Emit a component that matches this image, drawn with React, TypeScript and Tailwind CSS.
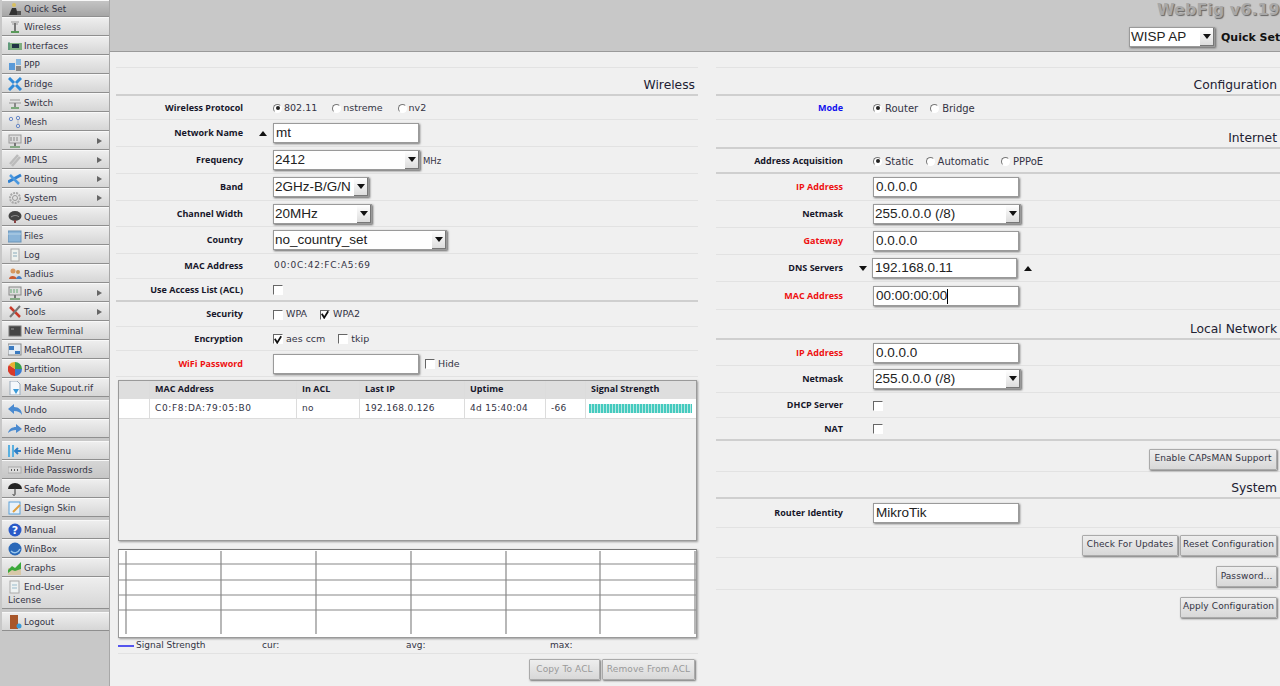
import React from "react";

const F = "font-['DejaVu_Sans',sans-serif]";
const A = "font-['Liberation_Sans',Arial,sans-serif]";
const O = "font-['Open_Sans',sans-serif]";

function Ico({ n }: { n: string }) {
  const s = (c: React.ReactNode) => (
    <svg viewBox="0 0 14 14" className="w-[14px] h-[14px] shrink-0 inline-block align-middle">{c}</svg>
  );
  switch (n) {
    case "quick": return s(<><path d="M1 13 L4 6 L8 6 L10 13Z" fill="#333" /><path d="M9 9h4v4H9z" fill="#555" /><circle cx="6" cy="3" r="2" fill="#d8c060" /></>);
    case "wireless": return s(<><path d="M3 2h8M4 4h6" stroke="#999" fill="none" /><path d="M7 3v8" stroke="#777" strokeWidth="2" /><path d="M3 12h8" stroke="#5a9a5a" strokeWidth="2" /></>);
    case "interfaces": return s(<><rect x="0" y="4" width="14" height="7" fill="#7fae7f" /><rect x="4" y="5" width="7" height="4" fill="#234" /><path d="M1 3v8" stroke="#487" /></>);
    case "ppp": return s(<><rect x="1" y="5" width="6" height="7" fill="#5a9ad8" /><rect x="8" y="1" width="5" height="6" fill="#8ab8e0" /><rect x="8" y="8" width="5" height="5" fill="#888" /></>);
    case "bridge": return s(<><path d="M1 1l5 5M13 1L8 6M1 13l5-5M13 13L8 8" stroke="#2f8ad8" strokeWidth="3" /></>);
    case "switch": return s(<><path d="M2 4h10M1 7h12" stroke="#999" /><path d="M7 7v4" stroke="#888" strokeWidth="2" /><path d="M3 12h8" stroke="#7aa87a" strokeWidth="2" /></>);
    case "mesh": return s(<><circle cx="3" cy="4" r="1.7" fill="none" stroke="#6a8ac8" /><circle cx="10" cy="3" r="1.7" fill="none" stroke="#6a8ac8" /><circle cx="10" cy="11" r="1.7" fill="none" stroke="#6a8ac8" /><path d="M10 5v4" stroke="#bbb" /></>);
    case "ip": return s(<><rect x="1" y="1" width="12" height="8" fill="#ddd" stroke="#999" /><path d="M3 3v4M6 3v4M9 3v4" stroke="#888" /><path d="M7 9v3" stroke="#777" strokeWidth="2" /><path d="M2 13h10" stroke="#6a9a6a" strokeWidth="1.5" /></>);
    case "mpls": return s(<><path d="M2 11L10 2M4 13l8-9" stroke="#bbb" strokeWidth="2.5" /></>);
    case "routing": return s(<><path d="M0 10L13 3" stroke="#2f80d0" strokeWidth="3" /><path d="M2 3l9 9" stroke="#4a98e0" strokeWidth="2.5" /></>);
    case "system": return s(<><circle cx="7" cy="7" r="5" fill="none" stroke="#aaa" strokeWidth="2" strokeDasharray="2 1" /><circle cx="7" cy="7" r="2.5" fill="none" stroke="#999" /></>);
    case "queues": return s(<><ellipse cx="7" cy="6" rx="6.5" ry="5" fill="#444" /><path d="M3 7c3-2 6-2 8 0" stroke="#999" fill="none" /><path d="M7 10v3" stroke="#844" strokeWidth="2" /></>);
    case "files": return s(<><rect x="0" y="2" width="13" height="11" fill="#8ab4d8" stroke="#6a94b8" /><path d="M0 5h13" stroke="#b8d4e8" /></>);
    case "log": return s(<><rect x="3" y="1" width="8" height="12" fill="#eef2ee" stroke="#aaa" /><path d="M5 5h4M5 8h4" stroke="#8ab" /></>);
    case "radius": return s(<><circle cx="5" cy="4" r="2.5" fill="#d89860" /><path d="M1 12c0-4 7-4 8 0z" fill="#c85a30" /><circle cx="10" cy="5" r="2" fill="#c89050" /><path d="M8 12c1-4 5-4 6 0z" fill="#4a80c0" /></>);
    case "ipv6": return s(<><rect x="1" y="1" width="12" height="8" fill="#ddd" stroke="#888" /><path d="M3 3v4M6 3v4M9 3v4" stroke="#6a7" /><path d="M7 9v3" stroke="#777" strokeWidth="2" /><path d="M2 13h10" stroke="#6a9a6a" strokeWidth="1.5" /></>);
    case "tools": return s(<><path d="M2 2l10 10" stroke="#c83a2a" strokeWidth="2.5" /><path d="M12 1L2 12" stroke="#777" strokeWidth="2" /></>);
    case "terminal": return s(<><rect x="1" y="2" width="12" height="10" fill="#444" stroke="#777" /><path d="M3 5h3" stroke="#999" /></>);
    case "meta": return s(<><rect x="0" y="1" width="13" height="11" fill="#e4ecf4" stroke="#888" /><path d="M1 3h5v4H1z" fill="#3a7ac0" /><path d="M7 8h5v3H7z" fill="#3a7ac0" /></>);
    case "partition": return s(<><path d="M7 7V0a7 7 0 0 1 7 7z" fill="#3aa04a" /><path d="M7 7h7a7 7 0 0 1-7 7z" fill="#3a7ad0" /><path d="M7 7v7A7 7 0 0 1 1 3z" fill="#d83a2a" /><path d="M7 7L1 3a7 7 0 0 1 6-3z" fill="#e8b030" /></>);
    case "supout": return s(<><path d="M2 0h7l3 3v11H2z" fill="#f4f8fc" stroke="#9ab" /><path d="M5 8h6l-3 5z" fill="#3a9ad8" /></>);
    case "undo": return s(<><path d="M0 6l6-5v3c5 0 8 3 8 8-2-3-4-4-8-4v3z" fill="#4a8ad0" /></>);
    case "redo": return s(<><path d="M14 7L8 2v3C4 5 1 7 0 11c2-2 5-3 8-3v3z" fill="#4a8ad0" /></>);
    case "hide": return s(<><path d="M1 1v12M5 1v12" stroke="#5ab0e0" strokeWidth="2" /><path d="M13 7H7m3-3L7 7l3 3" stroke="#2f80c8" strokeWidth="2" fill="none" /></>);
    case "pw": return s(<><rect x="0" y="4" width="13" height="6" fill="#ddd" stroke="#aaa" /><path d="M3 7h1M6 7h1M9 7h1" stroke="#333" strokeWidth="1.5" /></>);
    case "safe": return s(<><path d="M0 7a7 6 0 0 1 14 0z" fill="#222" /><path d="M7 6v6c0 2-2 2-2 0" stroke="#333" fill="none" /></>);
    case "design": return s(<><rect x="1" y="1" width="11" height="12" fill="#e8f2fa" stroke="#5aa0d8" /><path d="M5 11l7-7" stroke="#e0a040" strokeWidth="2" /></>);
    case "manual": return s(<><circle cx="7" cy="7" r="6.5" fill="#2a5ac8" /><text x="7" y="11" textAnchor="middle" fontSize="11" fontWeight="700" fill="#fff" fontFamily="DejaVu Sans">?</text></>);
    case "winbox": return s(<><circle cx="7" cy="7" r="6.5" fill="#2a68b8" /><path d="M3 9c3 3 7 2 9-2" stroke="#9cc8ec" strokeWidth="1.5" fill="none" /></>);
    case "graphs": return s(<><rect x="0" y="7" width="13" height="7" fill="#d8c8a8" /><path d="M0 9l4-4 3 2 6-6v7l-6 2-3-1-4 3z" fill="#3aa83a" /></>);
    case "license": return s(<><rect x="2" y="1" width="9" height="12" fill="#eef2f2" stroke="#aaa" /><path d="M4 5h5M4 8h5" stroke="#9bc" /></>);
    case "logout": return s(<><rect x="2" y="0" width="8" height="14" fill="#a8562a" /><circle cx="11" cy="11" r="2.5" fill="#3a9ad8" /></>);
    default: return null;
  }
}

function Item({ n, t, h = "h-[19px]", more, bg = "bg-linear-to-b from-[#eeeeee] to-[#d6d6d6]" }: { n: string; t: string; h?: string; more?: boolean; bg?: string }) {
  return (
    <div className={`${h} ${bg} border-b border-b-[#8f8f8f] border-t border-t-[#f8f8f8] flex items-center pl-[6px] pr-[7px] gap-[2px] text-[8.8px] text-[#333344] whitespace-nowrap`}>
      <Ico n={n} />
      <span className="flex-1 pt-[2px]">{t}</span>
      {more && <span className="w-0 h-0 border-y-[3px] border-y-transparent border-l-[5px] border-l-[#666]" />}
    </div>
  );
}

function Sidebar() {
  return (
    <div className={`${F} w-[110px] shrink-0 bg-[#c8c8c8] pl-[2px] border-r border-r-[#a8a8a8] h-[686px] overflow-hidden flex flex-col gap-[3px]`}>
      <div className="flex flex-col">
        <Item n="quick" t="Quick Set" h="h-[17px]" bg="bg-linear-to-b from-[#c4c4c4] to-[#a6a6a6]" />
        {[
          ["wireless", "Wireless"], ["interfaces", "Interfaces"], ["ppp", "PPP"], ["bridge", "Bridge"], ["switch", "Switch"], ["mesh", "Mesh"],
          ["ip", "IP", 1], ["mpls", "MPLS", 1], ["routing", "Routing", 1], ["system", "System", 1], ["queues", "Queues"], ["files", "Files"],
          ["log", "Log"], ["radius", "Radius"], ["ipv6", "IPv6", 1], ["tools", "Tools", 1], ["terminal", "New Terminal"], ["meta", "MetaROUTER"],
          ["partition", "Partition"], ["supout", "Make Supout.rif"],
        ].map((r) => <Item key={r[1] as string} n={r[0] as string} t={r[1] as string} more={!!r[2]} />)}
      </div>
      <div className="flex flex-col">
        <Item n="undo" t="Undo" />
        <Item n="redo" t="Redo" />
      </div>
      <div className="flex flex-col">
        <Item n="hide" t="Hide Menu" />
        <Item n="pw" t="Hide Passwords" bg="bg-linear-to-b from-[#d6d6d6] to-[#c6c6c6]" />
        <Item n="safe" t="Safe Mode" />
        <Item n="design" t="Design Skin" />
      </div>
      <div className="flex flex-col">
        <Item n="manual" t="Manual" />
        <Item n="winbox" t="WinBox" />
        <Item n="graphs" t="Graphs" />
        <div className="h-[32px] bg-linear-to-b from-[#eeeeee] to-[#d6d6d6] border-b border-b-[#8f8f8f] border-t border-t-[#f8f8f8] pl-[6px] pt-[2px] text-[8.8px] leading-[12px] text-[#333344]">
          <span className="inline-block w-[16px]"><Ico n="license" /></span>End-User<br />License
        </div>
      </div>
      <Item n="logout" t="Logout" />
    </div>
  );
}

const Arrow = ({ up }: { up?: boolean }) => (
  <span className={`w-0 h-0 border-x-[4px] border-x-transparent ${up ? "border-b-[5px] border-b-[#111]" : "border-t-[5px] border-t-[#111]"}`} />
);

function Row({ label, h, red, blue, heavy, marker, children }: { label?: string; h: string; red?: boolean; blue?: boolean; heavy?: boolean; marker?: React.ReactNode; children?: React.ReactNode }) {
  const c = red ? "text-[#ee1111]" : blue ? "text-[#1111ee]" : "text-[#16162a]";
  return (
    <div className={`${h} flex items-center border-b ${heavy ? "border-b-2 border-b-[#cfcfcf]" : "border-b-[#e2e2e2]"}`}>
      <div className={`${O} w-[127px] text-right text-[9px] font-bold ${c} whitespace-nowrap`}>{label}</div>
      <div className="w-[30px] flex items-center justify-center pl-[9px]">{marker}</div>
      <div className="flex-1 flex items-center text-[9.5px] text-[#333344]">{children}</div>
    </div>
  );
}

const Field = ({ w, v, caret }: { w: string; v?: string; caret?: boolean }) => (
  <div className={`${w} ${A} h-[20px] pt-[1px] bg-white border border-[#9a9a9a] shadow-[1px_1px_2px_#777] flex items-center pl-[2px] text-[13.5px] text-[#222]`}>
    {v}{caret && <span className="inline-block w-px h-[15px] bg-black" />}
  </div>
);

const Sel = ({ w, v }: { w: string; v: string }) => (
  <div className={`${w} ${A} h-[20px] bg-white border border-[#9a9a9a] shadow-[1px_1px_2px_#666] flex items-center pl-[1px] text-[13.5px] text-[#222]`}>
    <span className="flex-1 pt-[1px] whitespace-nowrap">{v}</span>
    <span className="w-[14px] self-stretch flex items-center justify-center bg-linear-to-b from-white to-[#dddddd] border-r border-b border-[#777]"><Arrow /></span>
  </div>
);

const Radio = ({ on, t, big }: { on?: boolean; t: string; big?: boolean }) => (
  <span className={`inline-flex items-center mt-px ${big ? "gap-[3px] mr-[12px] text-[10px]" : "gap-[2px] mr-[15px]"}`}>
    <span className="w-[9px] h-[9px] rounded-full border border-white border-t-[#777] border-l-[#777] bg-white flex items-center justify-center">
      {on && <span className="w-[4px] h-[4px] rounded-full bg-[#222]" />}
    </span>
    {t}
  </span>
);

const Check = ({ on, t, cl = "mr-[13px]" }: { on?: boolean; t?: string; cl?: string }) => (
  <span className={`inline-flex items-center gap-[3px] mt-px ${cl}`}>
    <span className="w-[10px] h-[10px] border border-white border-t-[#666] border-l-[#666] bg-white flex items-center justify-center">
      {on && (
        <svg viewBox="0 0 10 10" className="w-[9px] h-[9px]"><path d="M1 4l3 5 5-8" stroke="#111" strokeWidth="2.2" fill="none" /></svg>
      )}
    </span>
    {t}
  </span>
);

const Btn = ({ t, off, w }: { t: string; off?: boolean; w: string }) => (
  <div className={`${w} h-[21px] flex items-center justify-center bg-linear-to-b from-[#eeeeee] to-[#d8d8d8] border border-[#aaaaaa] shadow-[1px_1px_2px_#777] rounded-[1px] text-[9px] tracking-[0.1px] whitespace-nowrap ${off ? "text-[#999999]" : "text-[#333344]"}`}>{t}</div>
);

const Head = ({ t, h }: { t: string; h: string }) => (
  <div className={`${h} flex items-end justify-end pr-[3px] text-[12.3px] text-[#222233] border-b-2 border-b-[#cfcfcf]`}>{t}</div>
);

const Cell = ({ w, t, head, last, cl = "tracking-[0.3px]" }: { w: string; t?: string; head?: boolean; last?: boolean; cl?: string }) => (
  <div className={`${w} ${last ? "" : "border-r border-r-[#dcdcdc]"} h-full flex items-center pl-[5px] text-[9px] whitespace-nowrap ${head ? `${O} pb-[2px] font-bold text-[#16162a]` : `text-[#333344] ${cl}`}`}>{t}</div>
);

function Graph() {
  const vs = [7, 102, 197, 292, 387, 481, 576];
  const hs = [13, 29, 44, 59];
  return (
    <svg className="block w-full h-[85px]" viewBox="0 0 577 85">
      {hs.map((y) => <line key={y} x1="0" x2="577" y1={y} y2={y} stroke="#888" strokeWidth="1.2" />)}
      {vs.map((x) => <line key={x} x1={x} x2={x} y1="0" y2="83" stroke="#888" strokeWidth="1.2" />)}
    </svg>
  );
}

function Left() {
  return (
    <div className="w-[582px] ml-[6px] shrink-0">
      <div className="h-[16px] border-b border-b-[#e2e2e2]" />
      <Head t="Wireless" h="h-[28px]" />
      <Row label="Wireless Protocol" h="h-[24px]"><Radio on t="802.11" /><Radio t="nstreme" /><Radio t="nv2" /></Row>
      <Row label="Network Name" h="h-[27px]" marker={<Arrow up />}><Field w="w-[146px]" v="mt" /></Row>
      <Row label="Frequency" h="h-[27px]"><Sel w="w-[147px]" v="2412" /><span className="ml-[3px] mt-[2px] text-[8.5px]">MHz</span></Row>
      <Row label="Band" h="h-[27px]"><Sel w="w-[96px]" v="2GHz-B/G/N" /></Row>
      <Row label="Channel Width" h="h-[26px]"><Sel w="w-[99px]" v="20MHz" /></Row>
      <Row label="Country" h="h-[27px]"><Sel w="w-[174px]" v="no_country_set" /></Row>
      <Row label="MAC Address" h="h-[25px]"><span className="ml-px tracking-[0.7px] text-[9px]">00:0C:42:FC:A5:69</span></Row>
      <Row label="Use Access List (ACL)" h="h-[23px]" heavy><Check /></Row>
      <Row label="Security" h="h-[25px]"><Check t="WPA" /><Check on t="WPA2" /></Row>
      <Row label="Encryption" h="h-[24px]"><Check on t="aes ccm" /><Check t="tkip" /></Row>
      <Row label="WiFi Password" h="h-[26px]" red><Field w="w-[146px]" /><Check t="Hide" cl="ml-[6px]" /></Row>
      <div className="ml-[2px] mt-[3px] w-[579px] h-[161px] border border-[#9a9a9a] shadow-[1px_1px_2px_#999] flex flex-col">
        <div className="h-[18px] shrink-0 flex bg-[#dedede]">
          <Cell w="w-[31px]" head /><Cell w="w-[147px]" t="MAC Address" head /><Cell w="w-[63px]" t="In ACL" head /><Cell w="w-[105px]" t="Last IP" head /><Cell w="w-[81px]" t="Uptime" head /><Cell w="w-[40px]" head /><Cell w="w-[110px]" t="Signal Strength" head last />
        </div>
        <div className="h-[20px] shrink-0 flex border-b border-b-[#dcdcdc]">
          <Cell w="w-[31px] bg-white" />
          <Cell w="w-[147px] bg-white" t="C0:F8:DA:79:05:B0" cl="tracking-[0.65px]" />
          <Cell w="w-[63px] bg-white" t="no" />
          <Cell w="w-[105px] bg-white" t="192.168.0.126" />
          <Cell w="w-[81px] bg-white" t="4d 15:40:04" />
          <Cell w="w-[40px] bg-white" t="-66" />
          <div className="w-[110px] bg-white h-full flex items-center pl-[3px]">
            <div className="w-[103px] h-[9px] bg-[repeating-linear-gradient(90deg,#45cbbf_0,#45cbbf_2px,#b5e8e3_2px,#b5e8e3_3px)]" />
          </div>
        </div>
      </div>
      <div className="ml-[2px] mt-[8px] w-[579px] h-[89px] bg-white border border-[#9a9a9a] border-t-[#777] shadow-[1px_1px_2px_#999] pt-[1px]">
        <Graph />
      </div>
      <div className="h-[15px] mt-[1px] flex items-center text-[9px] text-[#333344] border-b border-b-[#e2e2e2] ml-[2px]">
        <span className="w-[16px] h-[2px] bg-[#5555ee] mr-[2px]" />
        <span className="w-[126px]">Signal Strength</span>
        <span className="w-[144px]">cur:</span>
        <span className="w-[144px]">avg:</span>
        <span>max:</span>
      </div>
      <div className="flex justify-end gap-[2px] pr-[3px] pt-[5px]">
        <Btn w="w-[71px]" t="Copy To ACL" off />
        <Btn w="w-[93px]" t="Remove From ACL" off />
      </div>
    </div>
  );
}

function BtnRow({ h, children, line = true }: { h: string; children: React.ReactNode; line?: boolean }) {
  return <div className={`${h} flex items-center justify-end gap-[2px] pr-[3px] ${line ? "border-b border-b-[#e2e2e2]" : ""}`}>{children}</div>;
}

function Right() {
  return (
    <div className="flex-1 ml-[18px] min-w-0">
      <div className="h-[16px] border-b border-b-[#e2e2e2]" />
      <Head t="Configuration" h="h-[28px]" />
      <Row label="Mode" h="h-[24px]" blue><Radio big on t="Router" /><Radio big t="Bridge" /></Row>
      <Head t="Internet" h="h-[29px]" />
      <Row label="Address Acquisition" h="h-[25px]" heavy><Radio big on t="Static" /><Radio big t="Automatic" /><Radio big t="PPPoE" /></Row>
      <Row label="IP Address" h="h-[27px]" red><Field w="w-[146px]" v="0.0.0.0" /></Row>
      <Row label="Netmask" h="h-[27px]"><Sel w="w-[148px]" v="255.0.0.0 (/8)" /></Row>
      <Row label="Gateway" h="h-[27px]" red><Field w="w-[146px]" v="0.0.0.0" /></Row>
      <Row label="DNS Servers" h="h-[27px]" marker={<Arrow />}>
        <Field w="w-[145px] -ml-px" v="192.168.0.11" />
        <span className="ml-[7px] flex"><Arrow up /></span>
      </Row>
      <Row label="MAC Address" h="h-[28px]" red><Field w="w-[146px]" v="00:00:00:00" caret /></Row>
      <Head t="Local Network" h="h-[30px]" />
      <Row label="IP Address" h="h-[26px]" red><Field w="w-[146px]" v="0.0.0.0" /></Row>
      <Row label="Netmask" h="h-[27px]"><Sel w="w-[148px]" v="255.0.0.0 (/8)" /></Row>
      <Row label="DHCP Server" h="h-[25px]"><Check /></Row>
      <Row label="NAT" h="h-[23px]" heavy><Check /></Row>
      <BtnRow h="h-[31px] pt-[6px]"><Btn w="w-[128px]" t="Enable CAPsMAN Support" /></BtnRow>
      <Head t="System" h="h-[27px]" />
      <Row label="Router Identity" h="h-[29px]"><Field w="w-[146px]" v="MikroTik" /></Row>
      <BtnRow h="h-[30px] pt-[5px]"><Btn w="w-[96px]" t="Check For Updates" /><Btn w="w-[97px]" t="Reset Configuration" /></BtnRow>
      <BtnRow h="h-[32px] pt-[6px]"><Btn w="w-[61px]" t="Password..." /></BtnRow>
      <BtnRow h="h-[31px] pt-[3px]" line={false}><Btn w="w-[97px]" t="Apply Configuration" /></BtnRow>
    </div>
  );
}

export default function App() {
  return (
    <div className={`${F} flex w-[1280px] h-[686px] overflow-hidden bg-[#f0f0f0]`}>
      <Sidebar />
      <div className="flex-1 min-w-0 flex flex-col">
        <div className="h-[52px] shrink-0 bg-[#c8c8c8] border-b border-b-[#9a9a9a] flex flex-col items-end">
          <div className="h-[21px] w-[123px] text-[16px] leading-[20px] font-bold text-[#a8a8a8] whitespace-nowrap [text-shadow:1px_1px_1px_#666]">WebFig v6.19</div>
          <div className="flex items-center h-[24px] mt-[4px]">
            <Sel w="w-[86px]" v="WISP AP" />
            <span className="ml-[6px] pt-[2px] text-[11px] font-bold text-[#111] whitespace-nowrap w-[59px]">Quick Set</span>
          </div>
        </div>
        <div className="flex flex-1 min-h-0">
          <Left />
          <Right />
        </div>
      </div>
    </div>
  );
}
